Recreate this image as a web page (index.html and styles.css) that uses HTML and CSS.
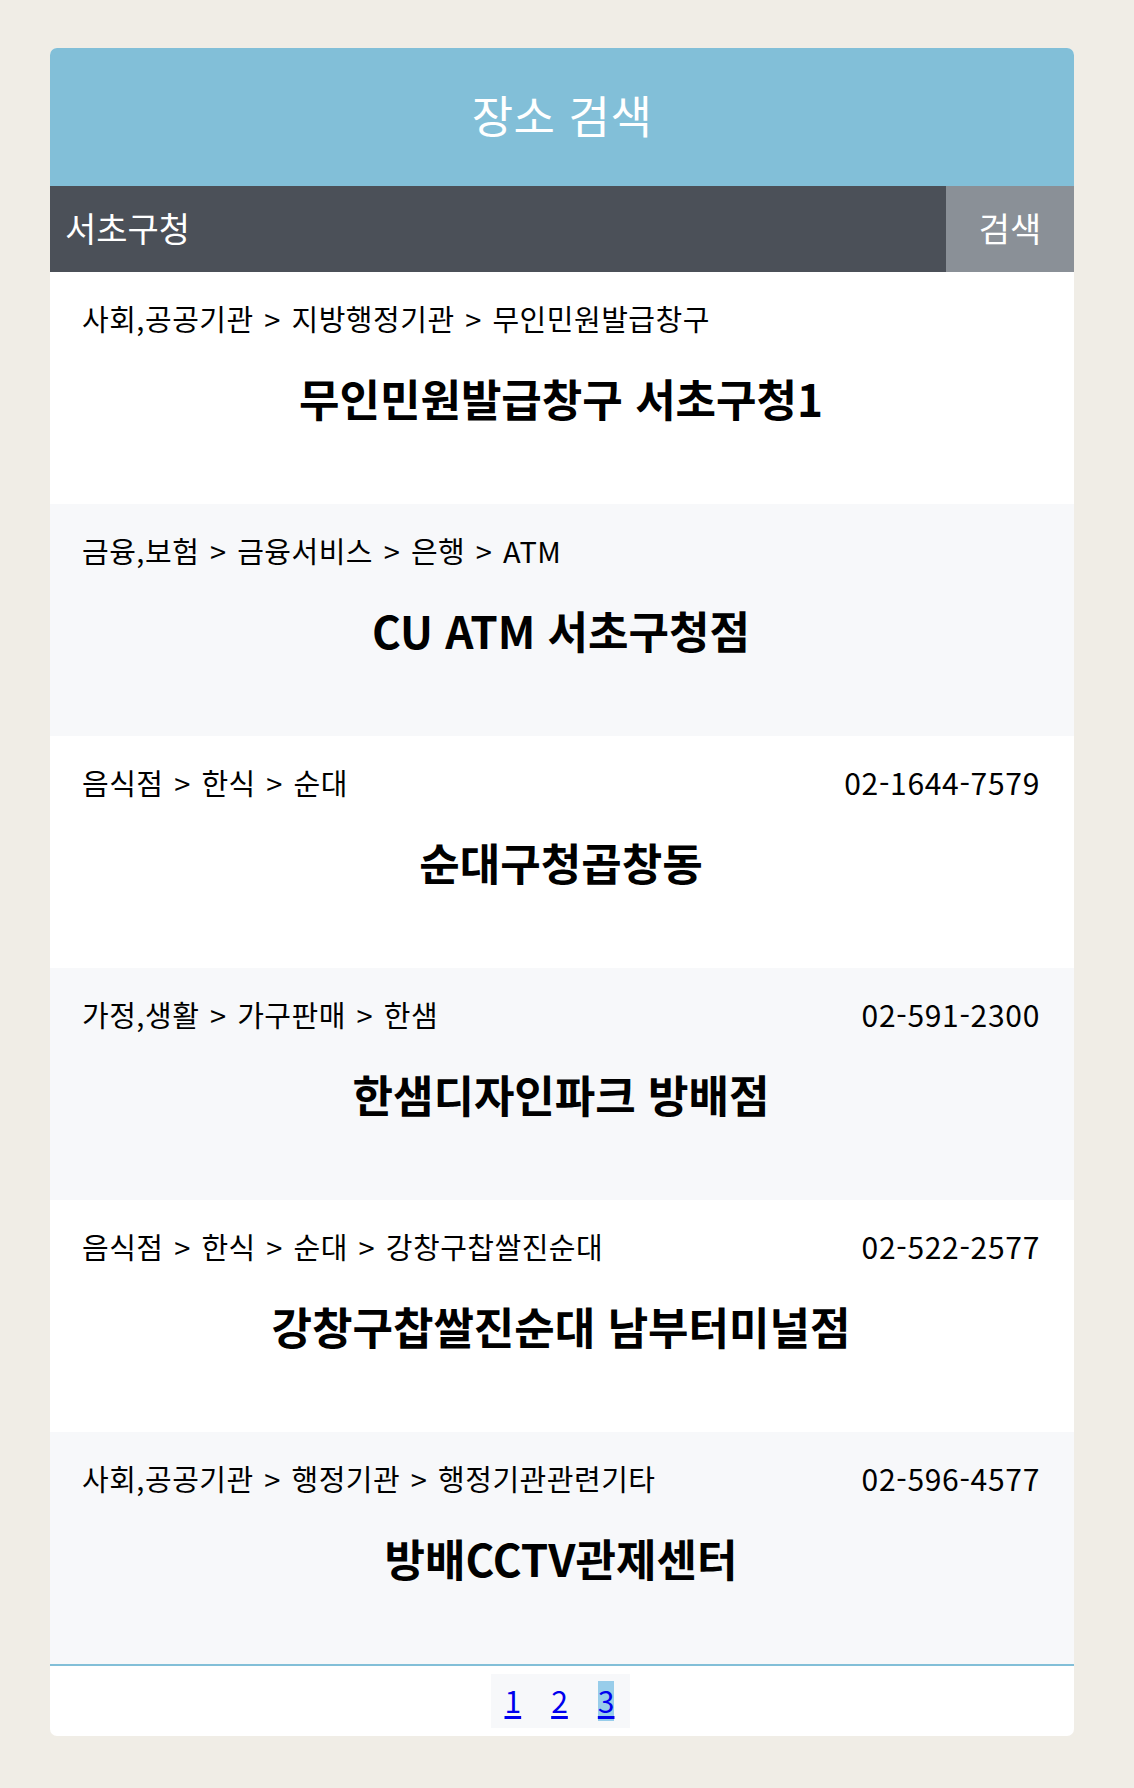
FILE: index.html
```html
<!DOCTYPE html>
<html lang="ko">
<head>
<meta charset="utf-8">
<title>장소 검색</title>
<link rel="stylesheet" href="styles.css">
</head>
<body>
<div class="card">
  <header class="card-header">장소 검색</header>
  <div class="search-bar">
    <div class="search-input">서초구청</div>
    <div class="search-btn">검색</div>
  </div>
  <ul class="results">
    <li class="item">
      <div class="meta"><span class="cat">사회,공공기관 &gt; 지방행정기관 &gt; 무인민원발급창구</span><span class="phone"></span></div>
      <div class="name">무인민원발급창구 서초구청1</div>
    </li>
    <li class="item alt">
      <div class="meta"><span class="cat">금융,보험 &gt; 금융서비스 &gt; 은행 &gt; ATM</span><span class="phone"></span></div>
      <div class="name">CU ATM 서초구청점</div>
    </li>
    <li class="item">
      <div class="meta"><span class="cat">음식점 &gt; 한식 &gt; 순대</span><span class="phone">02-1644-7579</span></div>
      <div class="name">순대구청곱창동</div>
    </li>
    <li class="item alt">
      <div class="meta"><span class="cat">가정,생활 &gt; 가구판매 &gt; 한샘</span><span class="phone">02-591-2300</span></div>
      <div class="name">한샘디자인파크 방배점</div>
    </li>
    <li class="item">
      <div class="meta"><span class="cat">음식점 &gt; 한식 &gt; 순대 &gt; 강창구찹쌀진순대</span><span class="phone">02-522-2577</span></div>
      <div class="name">강창구찹쌀진순대 남부터미널점</div>
    </li>
    <li class="item alt">
      <div class="meta"><span class="cat">사회,공공기관 &gt; 행정기관 &gt; 행정기관관련기타</span><span class="phone">02-596-4577</span></div>
      <div class="name">방배CCTV관제센터</div>
    </li>
  </ul>
  <footer class="pager-wrap">
    <nav class="pager">
      <a href="#" class="page">1</a>
      <a href="#" class="page">2</a>
      <a href="#" class="page current">3</a>
    </nav>
  </footer>
</div>
</body>
</html>
```

FILE: styles.css
```css
* { box-sizing: border-box; }

html, body {
  margin: 0;
  padding: 0;
}

body {
  background: #f0ede6;
  font-family: "Noto Sans CJK KR", "Noto Sans", sans-serif;
  color: #111;
  padding: 48px 60px 52px 50px;
}

.card {
  width: 1024px;
  background: #fff;
  border-radius: 7px;
  overflow: hidden;
}

.card-header {
  height: 138px;
  background: #82bfd8;
  color: #fff;
  font-size: 45px;
  letter-spacing: 0.5px;
  display: flex;
  align-items: center;
  justify-content: center;
  padding-bottom: 6px;
}

.search-bar {
  display: flex;
  height: 86px;
  background: #4b5058;
  color: #fff;
  font-size: 34px;
}

.search-input {
  flex: 1;
  display: flex;
  align-items: center;
  padding: 0 0 4px 15px;
}

.search-btn {
  width: 128px;
  background: #8a9097;
  display: flex;
  align-items: center;
  justify-content: center;
  padding-bottom: 4px;
}

.results {
  list-style: none;
  margin: 0;
  padding: 0;
}

.item {
  height: 232px;
  padding: 26px 34px 0 32px;
  background: #fff;
}

.item.alt {
  background: #f7f8fa;
}

.meta {
  display: flex;
  justify-content: space-between;
  align-items: center;
  height: 40px;
  line-height: 40px;
}

.cat {
  font-size: 29px;
  word-spacing: 2px;
  letter-spacing: 0.5px;
  color: #000;
}

.phone {
  font-size: 30px;
  letter-spacing: 0.7px;
  color: #000;
}

.name {
  margin-top: 30px;
  height: 60px;
  line-height: 60px;
  text-align: center;
  font-size: 44px;
  font-weight: 700;
  color: #000;
}

.pager-wrap {
  border-top: 2px solid #82bfd8;
  height: 72px;
  padding-top: 8px;
  display: flex;
  justify-content: center;
}

.pager {
  height: 54px;
  background: #f7f8fa;
  display: flex;
  align-items: center;
  gap: 30px;
  padding: 0 16px 0 14px;
  margin-left: -3px;
}

.page {
  font-size: 30px;
  line-height: 38px;
  color: #0000ee;
  text-decoration: underline;
  text-underline-offset: 3px;
  padding-bottom: 2px;
}

.page.current {
  background: #98cdea;
}
```
